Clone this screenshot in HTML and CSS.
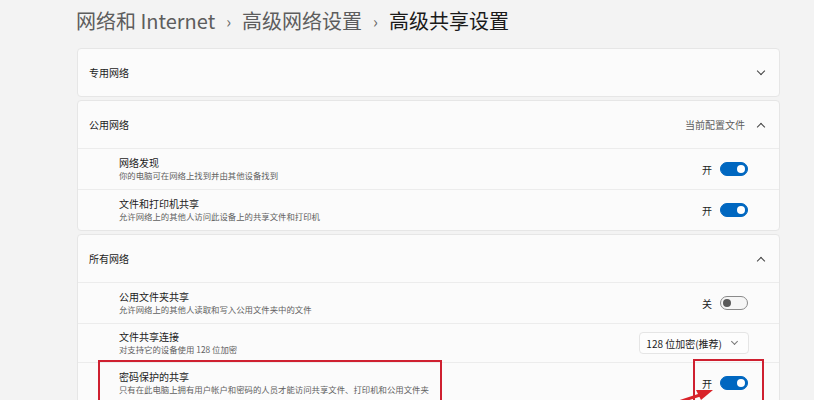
FILE: index.html
```html
<!DOCTYPE html>
<html>
<head>
    <meta charset="UTF-8">
    <link rel="stylesheet" href="styles.css">
</head>
<body>
    <div class="page">
        <div class="breadcrumb">
            <span class="crumb">网络和 Internet</span>
            <span class="sep">›</span>
            <span class="crumb">高级网络设置</span>
            <span class="sep">›</span>
            <span class="crumb current">高级共享设置</span>
        </div>

        <div class="card">
            <div class="card-header">
                <span class="header-title">专用网络</span>
                <span class="chevron down"></span>
            </div>
        </div>

        <div class="card">
            <div class="card-header">
                <span class="header-title">公用网络</span>
                <span class="header-note">当前配置文件</span>
                <span class="chevron up"></span>
            </div>
            <div class="row">
                <div class="row-text">
                    <div class="row-title">网络发现</div>
                    <div class="row-desc">你的电脑可在网络上找到并由其他设备找到</div>
                </div>
                <span class="state">开</span>
                <span class="toggle on"></span>
            </div>
            <div class="row">
                <div class="row-text">
                    <div class="row-title">文件和打印机共享</div>
                    <div class="row-desc">允许网络上的其他人访问此设备上的共享文件和打印机</div>
                </div>
                <span class="state">开</span>
                <span class="toggle on"></span>
            </div>
        </div>

        <div class="card">
            <div class="card-header">
                <span class="header-title">所有网络</span>
                <span class="chevron up"></span>
            </div>
            <div class="row">
                <div class="row-text">
                    <div class="row-title">公用文件夹共享</div>
                    <div class="row-desc">允许网络上的其他人读取和写入公用文件夹中的文件</div>
                </div>
                <span class="state">关</span>
                <span class="toggle"></span>
            </div>
            <div class="row short">
                <div class="row-text">
                    <div class="row-title">文件共享连接</div>
                    <div class="row-desc">对支持它的设备使用 128 位加密</div>
                </div>
                <div class="select">
                    <span>128 位加密(推荐)</span>
                    <span class="chevron down small"></span>
                </div>
            </div>
            <div class="row">
                <div class="row-text">
                    <div class="row-title">密码保护的共享</div>
                    <div class="row-desc">只有在此电脑上拥有用户帐户和密码的人员才能访问共享文件、打印机和公用文件夹</div>
                </div>
                <span class="state">开</span>
                <span class="toggle on"></span>
            </div>
        </div>
    </div>

    <div class="mark mark-text"></div>
    <div class="mark mark-toggle"></div>
    <svg class="arrow" width="814" height="400" viewBox="0 0 814 400">
        <line x1="660" y1="408" x2="700" y2="395" stroke="#d9232a" stroke-width="3"/>
        <polygon points="713,390 696,390 701,400" fill="#d9232a"/>
    </svg>
</body>
</html>
```

FILE: styles.css
```css
body {
    margin: 0;
    background: #f3f3f3;
    font-family: "Noto Sans CJK SC", "Noto Sans", sans-serif;
    color: #1b1b1b;
    overflow: hidden;
    height: 400px;
}
.page {
    padding: 0 34px 0 77px;
}
.breadcrumb {
    height: 48px;
    display: flex;
    align-items: center;
    gap: 9px;
    margin-left: -1px;
    font-size: 20px;
    line-height: 1;
    padding-bottom: 6px;
    box-sizing: border-box;
}
.crumb {
    color: #5d5d5d;
}
.crumb.current {
    color: #1a1a1a;
}
.sep {
    color: #6a6a6a;
    font-size: 16px;
    margin: 0 2px;
}
.card {
    background: #fbfbfb;
    border: 1px solid #e6e6e6;
    border-radius: 4px;
    margin-bottom: 3px;
}
.card-header {
    height: 47px;
    display: flex;
    align-items: center;
    padding: 0 12px 0 11px;
    font-size: 10px;
}
.header-title {
    flex: 1;
}
.header-note {
    color: #5d5d5d;
    margin-right: 10px;
}
.chevron {
    width: 5px;
    height: 5px;
    border-right: 1px solid #444;
    border-bottom: 1px solid #444;
    margin: 0 3px;
}
.chevron.down {
    transform: translateY(-2px) rotate(45deg);
}
.chevron.up {
    transform: translateY(2px) rotate(-135deg);
}
.chevron.small {
    width: 4px;
    height: 4px;
    border-color: #777;
    margin-left: 10px;
}
.row {
    height: 40px;
    border-top: 1px solid #ececec;
    display: flex;
    align-items: center;
    padding: 0 31px 0 41px;
}
.row.short {
    height: 38px;
}
.row-text {
    flex: 1;
}
.row-title {
    font-size: 10px;
    line-height: 12px;
}
.row-desc {
    font-size: 8.4px;
    line-height: 12px;
    color: #616161;
}
.state {
    font-size: 10px;
    margin-right: 8px;
}
.toggle {
    width: 26px;
    height: 12px;
    border: 1px solid #8a8a8a;
    border-radius: 8px;
    background: #f6f6f6;
    position: relative;
}
.toggle::after {
    content: "";
    position: absolute;
    left: 2px;
    top: 2px;
    width: 8px;
    height: 8px;
    border-radius: 50%;
    background: #5a5a5a;
}
.toggle.on {
    background: #0067c0;
    border-color: #0067c0;
}
.toggle.on::after {
    left: auto;
    right: 2px;
    background: #fff;
}
.select {
    display: flex;
    align-items: center;
    height: 20px;
    padding: 0 8px 0 6px;
    background: #fdfdfd;
    border: 1px solid #e5e5e5;
    border-radius: 4px;
    font-size: 10px;
    margin-right: -1px;
}
.mark {
    position: absolute;
    border: 2px solid #cf2030;
    border-bottom: none;
}
.mark-text {
    left: 98px;
    top: 360px;
    width: 340px;
    height: 50px;
}
.mark-toggle {
    left: 693px;
    top: 359px;
    width: 67px;
    height: 50px;
}
.arrow {
    position: absolute;
    left: 0;
    top: 0;
}
```
